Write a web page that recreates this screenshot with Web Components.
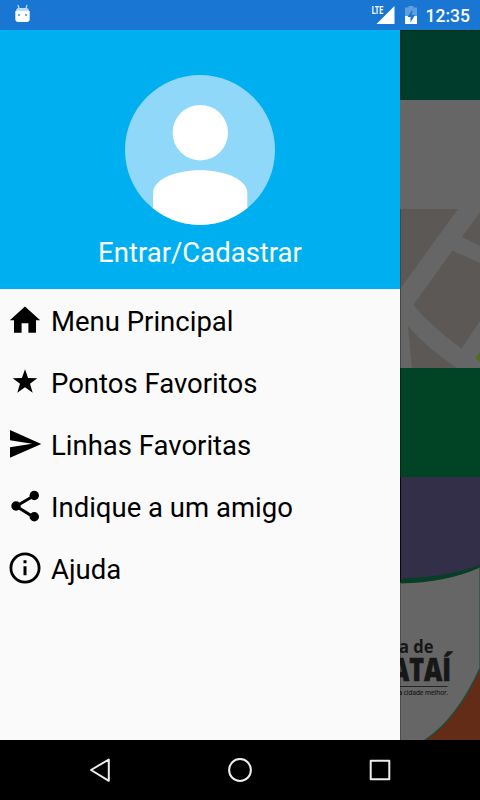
<!DOCTYPE html>
<html lang="pt-BR">
<head>
<meta charset="utf-8">
<title>Menu</title>
<style>
	body {
		margin: 0;
		background: #000;
		font-family: Roboto, sans-serif;
	}
</style>
</head>
<body>
<app-screen>
	<status-bar slot="status">12:35</status-bar>
	<nav-drawer>
		<user-header slot="header">Entrar/Cadastrar</user-header>
		<menu-item icon="home">Menu Principal</menu-item>
		<menu-item icon="star">Pontos Favoritos</menu-item>
		<menu-item icon="send">Linhas Favoritas</menu-item>
		<menu-item icon="share">Indique a um amigo</menu-item>
		<menu-item icon="info">Ajuda</menu-item>
	</nav-drawer>
	<page-behind></page-behind>
	<system-nav slot="nav"></system-nav>
</app-screen>

<script>
const define = (name, html, setup) => {
	const template = document.createElement('template')
	template.innerHTML = html

	customElements.define(name, class extends HTMLElement {
		constructor() {
			super()
			this.attachShadow({ mode: 'open' })
			this.shadowRoot.appendChild(template.content.cloneNode(true))
		}

		connectedCallback() {
			if (setup) setup(this)
		}
	})
}

const icons = {
	home: '<path d="M25 17.500L40.200 31.200H36v12.600h-7.600v-9.500h-6.800v9.500H14V31.200H9.800z"/>',
	star: '<path d="M25 18.300l3.100 8.800 9.200.1-7.300 5.500 2.700 9-7.700-5.400-7.700 5.400 2.700-9-7.300-5.500 9.200-.1z"/>',
	send: '<path d="M10 17v10.300l22 3.500-22 3.500v10.500L41.300 31z"/>',
	share: '<path d="M34 20.700L16 31.200l18 11" fill="none" stroke="#000" stroke-width="3"/><circle cx="34.300" cy="20.500" r="4.700"/><circle cx="16" cy="31" r="4.700"/><circle cx="34.300" cy="41.800" r="4.700"/>',
	info: '<circle cx="25" cy="31" r="14.100" fill="none" stroke="#000" stroke-width="2.800"/><path d="M23.500 23.300h3v3h-3zM23.500 29.300h3v9h-3z"/>',
}

define('app-screen', `
	<style>
		:host {
			display: grid;
			grid-template-rows: 30px 710px 60px;
			width: 480px;
			height: 800px;
			overflow: hidden;
		}

		.content {
			display: grid;
			grid-template-columns: 400px 80px;
		}
	</style>
	<slot name="status"></slot>
	<div class="content"><slot></slot></div>
	<slot name="nav"></slot>
`)

define('status-bar', `
	<style>
		:host {
			display: flex;
			align-items: center;
			box-sizing: border-box;
			padding: 0 10px 0 15px;
			background: #1976d2;
			color: #fff;
			font-size: 17.500px;
			font-weight: 500;
			line-height: 30px;
		}

		.signal {
			margin-left: auto;
		}

		.battery {
			margin: 0 9px 0 10px;
		}

		.time {
			padding-top: 2px;
		}
	</style>
	<svg width="15" height="30" fill="#fff">
		<path d="M3 5l1.500 5M12 5l-1.500 5" stroke="#bcdcf7" stroke-width="1.200"/>
		<path d="M1 11q0-3 3-3h7q3 0 3 3z" fill="#b8dcfa"/>
		<path d="M.3 11h14.400v8q0 3-3 3H3.300q-3 0-3-3z"/>
		<path d="M3 14h2v2H3zM10 14h2v2h-2z" fill="#75abe4"/>
	</svg>
	<svg class="signal" width="24" height="30" fill="#fff">
		<path d="M23.500 6v18H5.500z"/>
		<text x=".8" y="14" font-size="11" font-weight="700" textLength="11.500" lengthAdjust="spacingAndGlyphs">LTE</text>
	</svg>
	<svg class="battery" width="12" height="30" fill="#fff">
		<path d="M0 7.500h3.500V6h5v1.500H12V16H0z" fill="#5f9fe0"/>
		<path d="M0 16h12v8H0z"/>
		<path d="M7.500 9.500L2.500 17H5.500v5.500L10 15H7z" fill="#1976d2"/>
	</svg>
	<span class="time"><slot></slot></span>
`)

define('nav-drawer', `
	<style>
		:host {
			display: flex;
			flex-direction: column;
			background: #fafafa;
		}
	</style>
	<slot name="header"></slot>
	<slot></slot>
`)

define('user-header', `
	<style>
		:host {
			display: flex;
			flex-direction: column;
			align-items: center;
			box-sizing: border-box;
			height: 259px;
			padding-top: 45px;
			background: #00aff0;
			color: #fff;
			font-size: 27.500px;
			line-height: 32px;
		}

		svg {
			margin-bottom: 12px;
		}
	</style>
	<svg width="150" height="150" viewBox="0 0 150 150">
		<clipPath id="round"><circle cx="75" cy="75" r="75"/></clipPath>
		<g clip-path="url(#round)" fill="#fff">
			<path d="M0 0h150v150H0z" fill="#90d8f9"/>
			<circle cx="75.300" cy="57.700" r="27.700"/>
			<path d="M28 150v-32c0-13 21-22.700 47-22.700s47.300 9.700 47.300 22.700v32z"/>
		</g>
	</svg>
	<span><slot></slot></span>
`)

define('menu-item', `
	<style>
		:host {
			display: flex;
			align-items: center;
			height: 62px;
			color: #000;
			font-size: 27.500px;
			line-height: 32px;
		}

		svg {
			flex: none;
			width: 51px;
			height: 62px;
		}

		span {
			padding-top: 3px;
		}
	</style>
	<svg viewBox="0 0 51 62"></svg>
	<span><slot></slot></span>
`, el => {
	el.shadowRoot.querySelector('svg').innerHTML = icons[el.getAttribute('icon')] || ''
})

// what is left visible of the main page, already dimmed by the drawer scrim
define('page-behind', `
	<style>
		:host {
			display: grid;
			grid-template-rows: 70px 109px 159px 109px 263px;
			background: #666;
			overflow: hidden;
		}

		.toolbar {
			box-sizing: border-box;
			border-top: 1px solid #002f0c;
			background: #003c2b;
		}

		.button {
			background: #004425;
		}

		.toolbar,
		.button {
			border-left: 1px solid #002a12;
		}

		svg {
			display: block;
		}
	</style>
	<div class="toolbar"></div>
	<div></div>
	<svg width="80" height="159" fill="#5c5855">
		<path d="M0 0h58L0 80z"/>
		<path d="M80 3v34L62 28zM52.500 41.500L80 54v58l-18.500 27.500Q32 118 13.300 96z"/>
		<path d="M8 117q20 23 49 42H12z"/>
		<path d="M80 143v10l-4.500-4z" fill="#526d20"/>
		<path d="M.5 0v159" stroke="#484644"/>
	</svg>
	<div class="button"></div>
	<svg width="80" height="263">
		<path d="M0 0h80v89Q44 104 0 104z" fill="#332f48"/>
		<path d="M0 101.500q45-1 80-13.500v2.500Q47 105.500 0 106.500z" fill="#063e27"/>
		<path d="M25 263Q57 242 80 191v72z" fill="#632c17"/>
		<path d="M25 263Q57 242 80 191" fill="none" stroke="#14523f" stroke-width="1.200"/>
		<path d="M79.500 91v100" stroke="#42564e"/>
		<path d="M.5 0v105" stroke="#08070c"/>
		<path d="M.5 106v157" stroke="#4d4d4d"/>
		<g fill="#171717" font-family="'Open Sans', 'Noto Sans', sans-serif" font-weight="700">
			<text x="-1" y="175.500" font-size="17.500" textLength="34.500" lengthAdjust="spacingAndGlyphs">a de</text>
			<text x="-9" y="204" font-size="32" font-weight="800" stroke="#171717" stroke-width=".6" textLength="60" lengthAdjust="spacingAndGlyphs">ATAÍ</text>
			<text x="-2" y="218" font-size="7">a</text>
			<text x="3.800" y="218" font-size="6.500" font-weight="400" stroke="#171717" stroke-width=".15" textLength="44.500" lengthAdjust="spacingAndGlyphs">cidade melhor.</text>
		</g>
		<path d="M0 209.500h47.500" stroke="#252525"/>
	</svg>
`)

define('system-nav', `
	<style>
		:host {
			display: flex;
			justify-content: center;
			align-items: center;
			gap: 112px;
			background: #000;
		}
	</style>
	<svg width="28" height="28" fill="none" stroke="#eee" stroke-width="2" stroke-linejoin="round"><path d="M22.800 3.500v21.300L5 14z"/></svg>
	<svg width="28" height="28" fill="none" stroke="#eee" stroke-width="2"><circle cx="14" cy="14" r="10.900"/></svg>
	<svg width="28" height="28" fill="none" stroke="#eee" stroke-width="2" stroke-linejoin="round"><path d="M4.700 4.700h18.600v18.600H4.700z"/></svg>
`)
</script>
</body>
</html>
